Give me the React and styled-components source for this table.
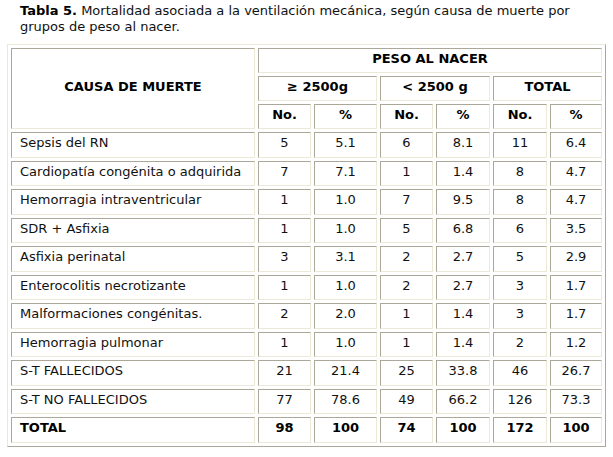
import React from "react"
import styled, { createGlobalStyle } from "styled-components"

const GlobalStyle = createGlobalStyle`
  body {
    margin: 0;
    background: #fff;
    font-family: "DejaVu Sans", Verdana, sans-serif;
    color: #111;
  }
`

const Page = styled.div`
  width: 613px;
  padding: 3px 0 0 7px;
  box-sizing: border-box;
`

const Caption = styled.p`
  margin: 0 0 9px 13px;
  font-size: 13px;
  line-height: 16px;
  width: 582px;

  b {
    color: #000;
  }
`

const Table = styled.table`
  border-collapse: separate;
  border-spacing: 3px;
  table-layout: fixed;
  width: 599px;
  border: 1px solid;
  border-color: #ece9d8 #aca899 #aca899 #ece9d8;
  font-size: 13px;
`

const Row = styled.tr`
  height: ${p => (p.head ? "25px" : "25.5px")};
`

const Cell = styled.td`
  border: 1px solid;
  border-color: #aca899 #ece9d8 #ece9d8 #aca899;
  padding: 0 8px 4px;
  text-align: ${p => (p.left ? "left" : "center")};
  font-weight: ${p => (p.bold ? "bold" : "normal")};
  color: ${p => (p.bold ? "#000" : "#111")};
  line-height: 15px;
  vertical-align: middle;
  white-space: nowrap;
  overflow: hidden;
`

const widths = [244, 53, 63, 53, 54, 54, 52]

const rows = [
  ["Sepsis del RN", "5", "5.1", "6", "8.1", "11", "6.4"],
  ["Cardiopatía congénita o adquirida", "7", "7.1", "1", "1.4", "8", "4.7"],
  ["Hemorragia intraventricular", "1", "1.0", "7", "9.5", "8", "4.7"],
  ["SDR + Asfixia", "1", "1.0", "5", "6.8", "6", "3.5"],
  ["Asfixia perinatal", "3", "3.1", "2", "2.7", "5", "2.9"],
  ["Enterocolitis necrotizante", "1", "1.0", "2", "2.7", "3", "1.7"],
  ["Malformaciones congénitas.", "2", "2.0", "1", "1.4", "3", "1.7"],
  ["Hemorragia pulmonar", "1", "1.0", "1", "1.4", "2", "1.2"],
  ["S-T FALLECIDOS", "21", "21.4", "25", "33.8", "46", "26.7"],
  ["S-T NO FALLECIDOS", "77", "78.6", "49", "66.2", "126", "73.3"]
]

const total = ["TOTAL", "98", "100", "74", "100", "172", "100"]

export default function App() {
  return (
    <Page>
      <GlobalStyle />
      <Caption>
        <b>Tabla 5.</b> Mortalidad asociada a la ventilación mecánica, según
        causa de muerte por grupos de peso al nacer.
      </Caption>
      <Table>
        <colgroup>
          {widths.map((w, i) => (
            <col key={i} style={{ width: w }} />
          ))}
        </colgroup>
        <tbody>
          <Row head>
            <Cell bold rowSpan={3}>CAUSA DE MUERTE</Cell>
            <Cell bold colSpan={6}>PESO AL NACER</Cell>
          </Row>
          <Row head>
            <Cell bold colSpan={2}>≥ 2500g</Cell>
            <Cell bold colSpan={2}>&lt; 2500 g</Cell>
            <Cell bold colSpan={2}>TOTAL</Cell>
          </Row>
          <Row head>
            <Cell bold>No.</Cell>
            <Cell bold>%</Cell>
            <Cell bold>No.</Cell>
            <Cell bold>%</Cell>
            <Cell bold>No.</Cell>
            <Cell bold>%</Cell>
          </Row>
          {rows.map(r => (
            <Row key={r[0]}>
              {r.map((v, i) => (
                <Cell key={i} left={i === 0}>{v}</Cell>
              ))}
            </Row>
          ))}
          <Row>
            {total.map((v, i) => (
              <Cell key={i} bold left={i === 0}>{v}</Cell>
            ))}
          </Row>
        </tbody>
      </Table>
    </Page>
  )
}
